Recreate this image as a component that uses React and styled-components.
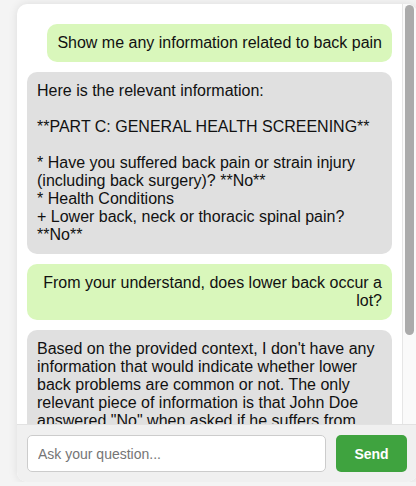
import React from 'react';
import styled, { createGlobalStyle } from 'styled-components';

const GlobalStyle = createGlobalStyle`
  html, body {
    margin: 0;
    padding: 0;
    background: #f4f4f4;
    font-family: "Liberation Sans", Arial, sans-serif;
    overflow: hidden;
  }
`;

const ChatContainer = styled.div`
  width: 400px;
  height: 478px;
  margin: 4px 0 0 17px;
  background: #fff;
  border-radius: 10px;
  box-shadow: 0 0 10px rgba(0, 0, 0, 0.1);
  display: flex;
  flex-direction: column;
  overflow: hidden;
`;

const MessagesPane = styled.div`
  flex: 1;
  min-height: 0;
  display: flex;
`;

const Messages = styled.div`
  flex: 1;
  overflow: hidden;
  padding: 20px 10px 10px;
  display: flex;
  flex-direction: column;
  gap: 10px;
`;

const ScrollTrack = styled.div`
  width: 15px;
  flex-shrink: 0;
  box-sizing: border-box;
  background: #fafafa;
  border-left: 1px solid #e6e6e6;
  padding: 1px 3px 0 2px;
`;

const ScrollThumb = styled.div`
  background: #ababab;
  border-radius: 6px;
`;

const Bubble = styled.div`
  align-self: ${(p) => (p.$user ? 'flex-end' : 'stretch')};
  background: ${(p) => (p.$user ? '#d9f7bb' : '#e0e0e0')};
  text-align: ${(p) => (p.$user ? 'right' : 'left')};
  color: #111;
  font-size: 16px;
  padding: 10px;
  border-radius: 10px;
  white-space: pre-wrap;
  flex-shrink: 0;
`;

const InputArea = styled.div`
  display: flex;
  gap: 10px;
  padding: 10px;
  background: #f0f0f0;
  border-top: 1px solid #e2e2e2;
`;

const Input = styled.input`
  flex: 1;
  height: 37px;
  box-sizing: border-box;
  padding: 10px;
  border: 1px solid #ccc;
  border-radius: 5px;
  font-family: "Liberation Sans", Arial, sans-serif;
  font-size: 14px;
  outline: none;

  &::placeholder {
    color: #757575;
  }
`;

const SendButton = styled.button`
  width: 71px;
  height: 37px;
  border: none;
  border-radius: 5px;
  background: #3fa33f;
  color: #fff;
  font-family: "Liberation Sans", Arial, sans-serif;
  font-size: 14px;
  font-weight: bold;
  cursor: pointer;
`;

const messages = [
  { user: true, text: 'Show me any information related to back pain' },
  {
    user: false,
    text:
      'Here is the relevant information:\n\n**PART C: GENERAL HEALTH SCREENING**\n\n* Have you suffered back pain or strain injury (including back surgery)? **No**\n* Health Conditions\n+ Lower back, neck or thoracic spinal pain? **No**',
  },
  { user: true, text: 'From your understand, does lower back occur a lot?' },
  {
    user: false,
    text:
      'Based on the provided context, I don\'t have any information that would indicate whether lower back problems are common or not. The only relevant piece of information is that John Doe answered "No" when asked if he suffers from lower back, neck or thoracic spinal pain.',
  },
];

const App = () => (
  <>
    <GlobalStyle />
    <ChatContainer>
      <MessagesPane>
        <Messages>
          {messages.map((m, i) => (
            <Bubble key={i} $user={m.user}>
              {m.text}
            </Bubble>
          ))}
        </Messages>
        <ScrollTrack>
          <ScrollThumb style={{ height: 330 }} />
        </ScrollTrack>
      </MessagesPane>
      <InputArea>
        <Input placeholder="Ask your question..." />
        <SendButton>Send</SendButton>
      </InputArea>
    </ChatContainer>
  </>
);

export default App;
